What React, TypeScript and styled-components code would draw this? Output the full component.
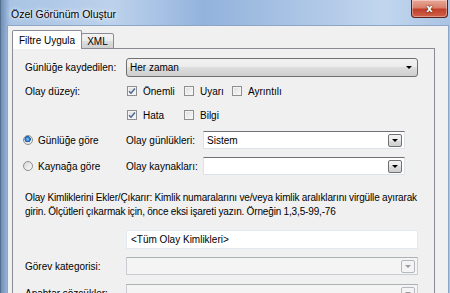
import React from "react";
import styled, { createGlobalStyle } from "styled-components";

const GlobalStyle = createGlobalStyle`
  html, body { margin: 0; padding: 0; background: #f0f0f0; }
  body { font-family: "Liberation Sans", Arial, sans-serif; font-size: 10px; color: #000; }
`;

const Window = styled.div`
  width: 450px;
  height: 293px;
  overflow: hidden;
  display: flex;
  flex-direction: column;
  background: linear-gradient(90deg, #6f8fb8 0%, #a8c3e4 2%, #bcd2ec 25%, #93b3dc 45%, #a3bfe2 60%, #c2d6ee 85%, #a9c3e4 100%);
  border-left: 1px solid #55708f;
`;

const TitleBar = styled.div`
  height: 25px;
  flex-shrink: 0;
  display: flex;
  align-items: flex-start;
  padding-left: 10px;
  padding-right: 3px;
`;

const Title = styled.span`
  margin-top: 8px;
  font-size: 10.5px;
  text-shadow: 0 0 6px #fff, 0 0 3px #fff;
`;

const CloseButton = styled.div`
  margin-left: auto;
  width: 35px;
  height: 17px;
  border: 1px solid #5a201a;
  border-top: none;
  border-radius: 0 0 4px 4px;
  background: linear-gradient(#e9a898 0%, #d9806c 45%, #c0402a 55%, #d0624a 100%);
  box-shadow: inset 0 0 0 1px rgba(255, 255, 255, 0.35);
  display: flex;
  align-items: center;
  justify-content: center;
  color: #fff;
  font-family: "DejaVu Sans", sans-serif;
  font-weight: bold;
  font-size: 10px;
  text-shadow: 0 0 2px #5a1a10, 0 0 1px #5a1a10;
`;

const Client = styled.div`
  flex: 1;
  margin: 0 2px 0 6px;
  background: #f0f0f0;
  border-left: 1px solid #8ea6c6;
  border-right: 1px solid #8ea6c6;
  border-top: 1px solid #8ea6c6;
  padding: 4px 13px 0 4px;
  display: flex;
  flex-direction: column;
`;

const TabStrip = styled.div`
  display: flex;
  align-items: flex-end;
  height: 19px;
  margin-bottom: -1px;
  position: relative;
  z-index: 1;
`;

const Tab = styled.div<{ $active?: boolean }>`
  height: ${(p) => (p.$active ? 19 : 16)}px;
  box-sizing: border-box;
  padding: 0 ${(p) => (p.$active ? 6 : 5)}px;
  display: flex;
  align-items: center;
  border: 1px solid #898c95;
  border-bottom: ${(p) => (p.$active ? "none" : "1px solid #898c95")};
  border-radius: 2px 2px 0 0;
  margin-left: ${(p) => (p.$active ? 0 : -1)}px;
  background: ${(p) =>
    p.$active ? "#ffffff" : "linear-gradient(#f3f3f3 0%, #ebebeb 50%, #dedede 50%, #d0d0d0 100%)"};
`;

const Panel = styled.div`
  flex: 1;
  border: 1px solid #898c95;
  border-bottom: none;
  background: #f0f0f0;
  padding: 9px 16px 0 12px;
  display: flex;
  flex-direction: column;
`;

const FormRow = styled.div<{ $gap?: number }>`
  display: grid;
  grid-template-columns: 101px 1fr;
  align-items: center;
  margin-top: ${(p) => p.$gap ?? 0}px;
`;

const Label = styled.span`
  white-space: nowrap;
`;

const Select = styled.div`
  height: 19px;
  box-sizing: border-box;
  border: 1px solid #707070;
  border-radius: 3px;
  background: linear-gradient(#f2f2f2 0%, #ebebeb 50%, #dddddd 50%, #cfcfcf 100%);
  display: flex;
  align-items: center;
  padding: 0 5px 0 3px;
`;

const Arrow = styled.span`
  margin-left: auto;
  width: 0;
  height: 0;
  border-left: 3px solid transparent;
  border-right: 3px solid transparent;
  border-top: 3px solid #000;
`;

const LevelRow = styled.div`
  display: grid;
  grid-template-columns: 101px 1fr;
  align-items: start;
  margin-top: 9px;
`;

const CheckGrid = styled.div`
  display: grid;
  grid-template-columns: 57px 48px auto;
  row-gap: 14px;
  padding-left: 1px;
`;

const CheckItem = styled.label`
  display: flex;
  align-items: center;
  gap: 6px;
  height: 10px;
`;

const Box = styled.span`
  width: 10px;
  height: 10px;
  box-sizing: border-box;
  border: 1px solid #8e8f8f;
  background: linear-gradient(135deg, #dcdcdc, #fbfbfb);
  box-shadow: inset 0 0 0 1px #f4f4f4;
  display: flex;
  align-items: center;
  justify-content: center;
`;

const SourceRow = styled.div<{ $gap: number }>`
  display: grid;
  grid-template-columns: 101px 77px 202px;
  align-items: center;
  margin-top: ${(p) => p.$gap}px;
`;

const RadioItem = styled.label`
  display: flex;
  align-items: center;
  gap: 5px;
  margin-left: -2px;
`;

const Radio = styled.span<{ $on?: boolean }>`
  width: 10px;
  height: 10px;
  box-sizing: border-box;
  border-radius: 50%;
  border: 1px solid #8e8f8f;
  background: ${(p) =>
    p.$on
      ? "radial-gradient(circle at 45% 40%, #9fd3ff 0, #2d7fd0 28%, #1d5a9c 45%, #e6e6e6 52%, #f8f8f8 100%)"
      : "linear-gradient(135deg, #d6d6d6, #fbfbfb)"};
`;

const Combo = styled.div<{ $disabled?: boolean }>`
  height: 18px;
  box-sizing: border-box;
  border: 1px solid ${(p) => (p.$disabled ? "#c9cdd2" : "#dde2e8")};
  border-top-color: ${(p) => (p.$disabled ? "#adb2b5" : "#6f7378")};
  background: ${(p) => (p.$disabled ? "#f4f4f4" : "#ffffff")};
  display: flex;
  align-items: center;
  padding: 0 2px 0 3px;
`;

const ComboButton = styled.span<{ $disabled?: boolean }>`
  margin-left: auto;
  width: 14px;
  height: 13px;
  box-sizing: border-box;
  border: 1px solid ${(p) => (p.$disabled ? "#b5b8bc" : "#707070")};
  border-radius: 2px;
  background: ${(p) =>
    p.$disabled ? "#f4f4f4" : "linear-gradient(#f2f2f2 0%, #ebebeb 50%, #dddddd 50%, #cfcfcf 100%)"};
  display: flex;
  align-items: center;
  justify-content: center;
`;

const SmallArrow = styled.span<{ $dim?: boolean }>`
  width: 0;
  height: 0;
  border-left: 3px solid transparent;
  border-right: 3px solid transparent;
  border-top: 3px solid ${(p) => (p.$dim ? "#9a9a9a" : "#000")};
`;

const Help = styled.p`
  margin: 16px -10px 0 0;
  line-height: 14px;
  letter-spacing: -0.15px;
  word-spacing: -0.2px;
  white-space: nowrap;
`;

const TextInput = styled.div`
  height: 19px;
  box-sizing: border-box;
  border: 1px solid #e3e9ef;
  background: #fff;
  display: flex;
  align-items: center;
  padding-left: 4px;
`;

const Check = () => (
  <svg width="8" height="8" viewBox="0 0 8 8">
    <path d="M1 4.2 L3 6.2 L7 1.5" fill="none" stroke="#4a6290" strokeWidth="1.4" />
  </svg>
);

const CheckBox: React.FC<{ label: string; checked?: boolean }> = ({ label, checked }) => (
  <CheckItem>
    <Box>{checked && <Check />}</Box>
    {label}
  </CheckItem>
);

const EditCombo: React.FC<{ value?: string; disabled?: boolean }> = ({ value, disabled }) => (
  <Combo $disabled={disabled}>
    {value}
    <ComboButton $disabled={disabled}>
      <SmallArrow $dim={disabled} />
    </ComboButton>
  </Combo>
);

export default function App() {
  return (
    <>
      <GlobalStyle />
      <Window>
        <TitleBar>
          <Title>Özel Görünüm Oluştur</Title>
          <CloseButton>x</CloseButton>
        </TitleBar>
        <Client>
          <TabStrip>
            <Tab $active>Filtre Uygula</Tab>
            <Tab>XML</Tab>
          </TabStrip>
          <Panel>
            <FormRow>
              <Label>Günlüğe kaydedilen:</Label>
              <Select>
                Her zaman
                <Arrow />
              </Select>
            </FormRow>
            <LevelRow>
              <Label>Olay düzeyi:</Label>
              <CheckGrid>
                <CheckBox label="Önemli" checked />
                <CheckBox label="Uyarı" />
                <CheckBox label="Ayrıntılı" />
                <CheckBox label="Hata" checked />
                <CheckBox label="Bilgi" />
              </CheckGrid>
            </LevelRow>
            <SourceRow $gap={11}>
              <RadioItem>
                <Radio $on />
                Günlüğe göre
              </RadioItem>
              <Label>Olay günlükleri:</Label>
              <EditCombo value="Sistem" />
            </SourceRow>
            <SourceRow $gap={8}>
              <RadioItem>
                <Radio />
                Kaynağa göre
              </RadioItem>
              <Label>Olay kaynakları:</Label>
              <EditCombo />
            </SourceRow>
            <Help>
              Olay Kimliklerini Ekler/Çıkarır: Kimlik numaralarını ve/veya kimlik aralıklarını virgülle ayırarak
              <br />
              girin. Ölçütleri çıkarmak için, önce eksi işareti yazın. Örneğin 1,3,5-99,-76
            </Help>
            <FormRow $gap={11}>
              <span />
              <TextInput>&lt;Tüm Olay Kimlikleri&gt;</TextInput>
            </FormRow>
            <FormRow $gap={8}>
              <Label>Görev kategorisi:</Label>
              <EditCombo disabled />
            </FormRow>
            <FormRow $gap={9}>
              <Label>Anahtar sözcükler:</Label>
              <EditCombo disabled />
            </FormRow>
          </Panel>
        </Client>
      </Window>
    </>
  );
}
